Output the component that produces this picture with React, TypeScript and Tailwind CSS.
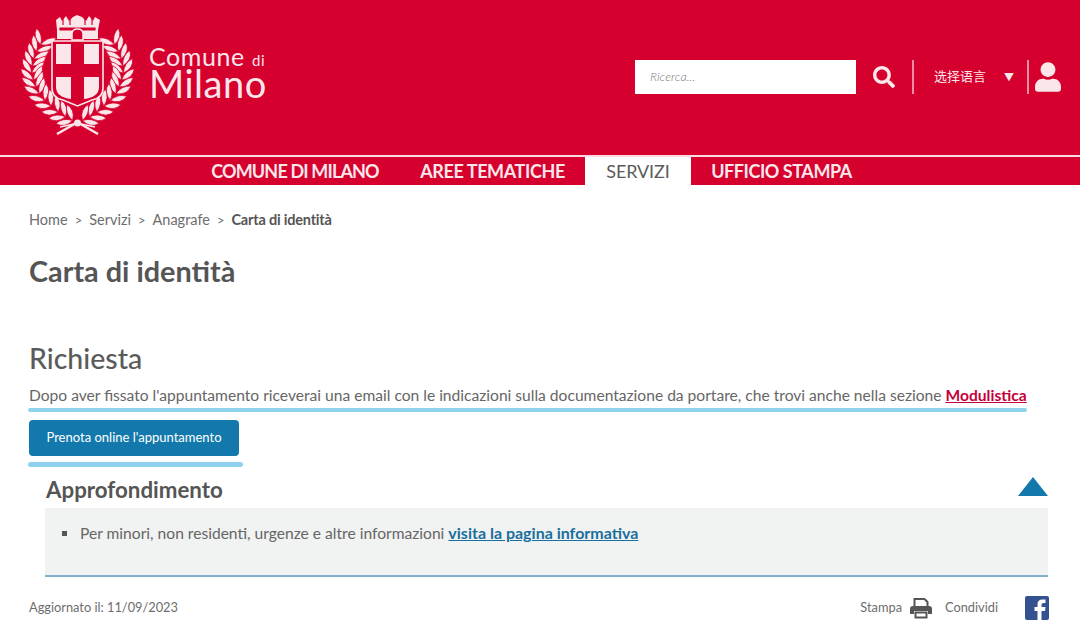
import React from 'react'
import { FaSearch, FaUser } from 'react-icons/fa'

const pink = '#fbe6ea'
const red = '#d6002e'

const navItems = [
  { label: 'COMUNE DI MILANO', cls: 'w-[210px] tracking-[-0.85px]' },
  { label: 'AREE TEMATICHE', cls: 'w-[185px] tracking-[-0.4px]' },
  { label: 'SERVIZI', cls: 'w-[106px] bg-white text-[#5b5b5b] font-normal tracking-[-0.1px]' },
  { label: 'UFFICIO STAMPA', cls: 'w-[181px] tracking-[-0.45px]' },
]

const leftBranch = [
  [42, 42], [38, 49], [35, 56], [33, 63], [32, 70], [33, 77], [35, 84], [38, 91], [43, 98], [49, 104], [56, 110], [63, 115], [70, 119],
]

// Rami di alloro del logo: coppie di foglie lungo la linea centrale
function Laurel({ flip }: { flip?: boolean }) {
  return (
    <g transform={flip ? 'translate(155,0) scale(-1,1)' : undefined}>
      {leftBranch.map(([x, y], i) => {
        const next = leftBranch[i - 1] ?? [x + 4, y - 8]
        const angle = (Math.atan2(next[1] - y, next[0] - x) * 180) / Math.PI + 90
        return (
          <g key={i} transform={`translate(${x} ${y}) rotate(${angle})`}>
            <path d="M0 3 Q-11 0 -11 -10 Q-2 -7 0 3 Z" fill={pink} stroke={red} strokeWidth="0.7" />
            <path d="M0 3 Q11 0 11 -10 Q2 -7 0 3 Z" fill={pink} stroke={red} strokeWidth="0.7" />
          </g>
        )
      })}
      <path d="M57 134 L78 122" stroke={pink} strokeWidth="2.5" fill="none" />
      <path d="M60 127 L74 124" stroke={pink} strokeWidth="1.5" fill="none" />
    </g>
  )
}

// Stemma disegnato nelle coordinate della pagina
function Crest() {
  return (
    <svg width="148" height="150" viewBox="0 0 148 150" className="shrink-0">
      <Laurel />
      <Laurel flip />
      <circle cx="77.5" cy="123" r="3.5" fill={pink} />
      <path d="M56 20 L60 17 L62 21 L66 16 L69 21 L73 17 L77 15 L82 17 L86 21 L89 16 L93 21 L95 17 L100 20 L98 30 L98 39 L57 39 L57 30 Z" fill={pink} />
      <path d="M60 28 H95 V30 H60 Z M63 19 V25 M70 19 V25 M85 19 V25 M92 19 V25" stroke={red} strokeWidth="1.2" fill={red} />
      <path d="M72 40 V34 Q72 29 77.5 29 Q83 29 83 34 V40 Z" fill={red} stroke={pink} strokeWidth="1.5" />
      <path d="M52 41 H103 V88 Q103 98 92 100 L77.5 106 L63 100 Q52 98 52 88 Z" fill={red} stroke={pink} strokeWidth="1.6" />
      <path d="M56 44 H71 V64 H56 Z M84 44 H99 V64 H84 Z M56 77 H71 V99 Q56 97 56 87 Z M84 77 H99 V87 Q99 97 84 99 Z" fill={pink} />
    </svg>
  )
}

function PrintIcon() {
  return (
    <svg width="22" height="22" viewBox="0 0 22 22" className="ml-[8px]">
      <path d="M4.5 10 V2 H14.5 L17.5 5 V10" fill="none" stroke="#555" strokeWidth="2" />
      <path d="M3 9 H19 Q22 9 22 12 V17 H18 V14 H4 V17 H0 V12 Q0 9 3 9 Z" fill="#555" />
      <path d="M5.5 15.5 H16.5 V20.5 H5.5 Z" fill="none" stroke="#555" strokeWidth="2" />
    </svg>
  )
}

function FacebookIcon() {
  return (
    <svg width="24" height="24" viewBox="0 0 24 24" className="ml-[27px]">
      <rect width="24" height="24" rx="2" fill="#34528f" />
      <path d="M16.5 24 V15 H20 L20.5 11 H16.5 V8.8 Q16.5 7 18.5 7 H20.5 V3.6 Q19 3.4 17.5 3.4 Q12.5 3.4 12.5 8.3 V11 H9.5 V15 H12.5 V24 Z" fill="#fff" />
    </svg>
  )
}

export default function App() {
  return (
    <div className='font-["Lato","Noto_Sans_CJK_SC",sans-serif] w-[1080px] h-[631px] overflow-hidden bg-white text-[#5b5b5b]'>
      <header className="h-[155px] bg-[#d6002e] flex items-start justify-between pr-[19px]">
        <div className="flex items-start">
          <Crest />
          <div className="text-[#fbe6ea] leading-none pt-[42px] pl-px">
            <div className="text-[25px] leading-[28px] tracking-[0.6px]">
              Comune <span className="text-[15px]">di</span>
            </div>
            <div className="text-[38px] leading-[30px] tracking-[0.5px] -mt-[6px]">Milano</div>
          </div>
        </div>
        <div className="flex items-center pt-[60px] text-[#fbe6ea]">
          <div className="w-[221px] h-[34px] bg-white flex items-center pl-[15px] text-[12.5px] italic font-light text-[#777]">
            Ricerca...
          </div>
          <FaSearch className="ml-[17px] w-[22px] h-[22px]" />
          <div className="ml-[17px] w-[2px] h-[34px] bg-[#ee8da3]" />
          <span className="ml-[20px] text-[13px]">选择语言</span>
          <span className="ml-[18px] text-[10px]">▼</span>
          <div className="ml-[13px] w-[2px] h-[34px] bg-[#ee8da3]" />
          <FaUser className="ml-[6px] w-[26px] h-[30px]" />
        </div>
      </header>
      <nav className="h-[30px] border-t-2 border-[#fbdbe3] bg-[#d6002e] flex pl-[190px] text-[18px] leading-[28px] font-bold text-[#fbe6ea]">
        {navItems.map((item) => (
          <span key={item.label} className={`text-center ${item.cls}`}>
            {item.label}
          </span>
        ))}
      </nav>

      <main className="px-[29px]">
        <div className="pt-[25px] flex items-center gap-[7px] text-[14.5px] leading-5 text-[#6d6d6d]">
          <span>Home</span>
          <span className="text-[13px]">&gt;</span>
          <span>Servizi</span>
          <span className="text-[13px]">&gt;</span>
          <span>Anagrafe</span>
          <span className="text-[13px]">&gt;</span>
          <span className="font-bold text-[#555] tracking-[-0.2px]">Carta di identità</span>
        </div>
        <h1 className="mt-[23px] text-[28.8px] leading-[36px] font-bold text-[#555]">Carta di identità</h1>
        <h2 className="mt-[51px] text-[28.5px] leading-[36px] font-medium text-[#5b5b5b]">Richiesta</h2>
        <p className="mt-[7px] text-[15.6px] leading-6 text-[#666] whitespace-nowrap">
          Dopo aver fissato l'appuntamento riceverai una email con le indicazioni sulla documentazione da portare, che trovi anche nella sezione{' '}
          <a className="font-bold text-[#c5003a] underline">Modulistica</a>
        </p>
        <div className="-ml-px mt-[1px] w-[999px] h-[4px] rounded-full bg-[#8ed2ee]" />
        <button className="mt-[8px] w-[210px] h-[36px] rounded bg-[#1379ad] text-white text-[13px] block">
          Prenota online l'appuntamento
        </button>
        <div className="-ml-px mt-[6px] w-[215px] h-[5px] rounded-full bg-[#8ed2ee]" />
        <section className="ml-[16px] mr-[3px]">
          <div className="flex items-center justify-between h-[41px]">
            <h3 className="ml-px mt-[4px] text-[22.3px] font-bold text-[#555]">Approfondimento</h3>
            <svg width="30" height="19" viewBox="0 0 30 19" className="-mt-[2px]">
              <path d="M15 0 L30 19 H0 Z" fill="#1379ad" />
            </svg>
          </div>
          <div className="h-[69px] bg-[#f1f2f2] border-b-2 border-[#7fb3c9] pl-[17px] pt-[13px] text-[15.6px] leading-6 text-[#666]">
            <div className="flex items-center gap-[13px]">
              <span className="w-[5px] h-[5px] bg-[#555]" />
              <span>
                Per minori, non residenti, urgenze e altre informazioni{' '}
                <a className="font-bold text-[16px] text-[#1a6f9c] underline">visita la pagina informativa</a>
              </span>
            </div>
          </div>
        </section>
        <footer className="mt-[19px] mr-[2px] flex items-center justify-between text-[12.8px] text-[#6d6d6d]">
          <span>Aggiornato il: 11/09/2023</span>
          <div className="flex items-center">
            <span>Stampa</span>
            <PrintIcon />
            <span className="ml-[13px]">Condividi</span>
            <FacebookIcon />
          </div>
        </footer>
      </main>
    </div>
  )
}
